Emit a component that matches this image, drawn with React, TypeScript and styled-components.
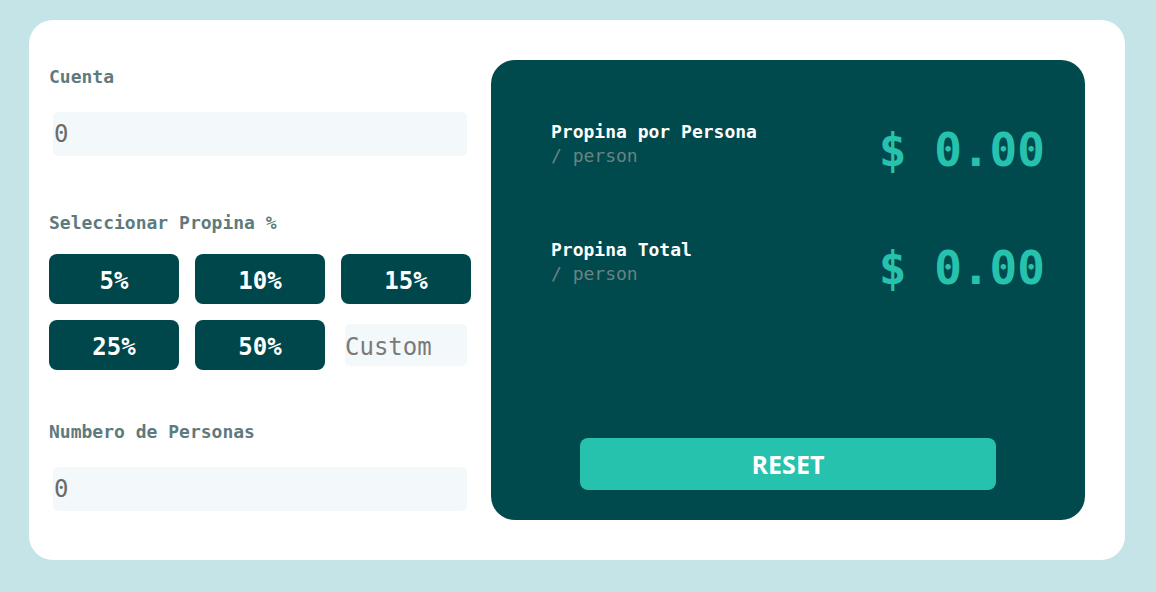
import React from "react";
import styled, { createGlobalStyle } from "styled-components";

const MONO = `"DejaVu Sans Mono", monospace`;

const GlobalStyle = createGlobalStyle`
  html, body { margin: 0; padding: 0; background: #c5e4e7; }
  body { font-family: ${MONO}; }
  * { box-sizing: border-box; }
`;

const Page = styled.div`
  padding: 20px 31px 32px 29px;
`;

const Card = styled.main`
  background: #ffffff;
  border-radius: 24px;
  height: 540px;
  padding: 40px 40px 40px 20px;
  display: grid;
  grid-template-columns: 422px 1fr;
  column-gap: 20px;
`;

const LeftColumn = styled.section`
  display: flex;
  flex-direction: column;
`;

const Field = styled.div<{ $gap?: number }>`
  display: flex;
  flex-direction: column;
  gap: 16px;
  margin-top: ${(p) => p.$gap ?? 0}px;
`;

const Label = styled.label`
  font-family: ${MONO};
  font-weight: bold;
  font-size: 18px;
  line-height: 32px;
  padding-top: 1px;
  margin-bottom: -1px;
  color: #5e7a7d;
`;

const TextInput = styled.input`
  margin: 4px;
  height: 44px;
  border: none;
  outline: none;
  border-radius: 5px;
  background: #f3f8fb;
  font-family: ${MONO};
  font-size: 24px;
  color: #6b6b6b;
  padding: 0 1px;
  &::placeholder { color: #7a7a7a; }
`;

const TipGrid = styled.div`
  display: grid;
  grid-template-columns: repeat(3, 130px);
  grid-auto-rows: 50px;
  gap: 16px;
`;

const TipButton = styled.button`
  border: none;
  border-radius: 8px;
  background: #00474b;
  color: #ffffff;
  font-family: ${MONO};
  font-weight: bold;
  font-size: 24px;
  padding: 3px 0 0;
  cursor: pointer;
`;

const CustomInput = styled(TextInput)`
  height: 42px;
  min-width: 0;
  font-size: 24px;
  padding: 3px 0 0;
`;

const ResultPanel = styled.section`
  background: #00494d;
  border-radius: 24px;
  padding: 60px 40px 30px 40px;
  display: flex;
  flex-direction: column;
`;

const ResultRow = styled.div<{ $gap?: number }>`
  display: flex;
  justify-content: space-between;
  align-items: flex-start;
  padding-left: 20px;
  margin-top: ${(p) => p.$gap ?? 0}px;
`;

const ResultText = styled.div`
  display: flex;
  flex-direction: column;
`;

const ResultTitle = styled.span`
  font-family: ${MONO};
  font-weight: bold;
  font-size: 18px;
  line-height: 24px;
  color: #ffffff;
`;

const ResultSub = styled.span`
  font-family: ${MONO};
  font-size: 18px;
  line-height: 24px;
  color: #6a8383;
`;

const Amount = styled.span`
  font-family: ${MONO};
  font-weight: bold;
  font-size: 46px;
  line-height: 56px;
  margin-top: 2px;
  color: #26c2ae;
  white-space: pre;
`;

const ResetButton = styled.button`
  margin-top: auto;
  align-self: center;
  width: 416px;
  height: 52px;
  border: none;
  border-radius: 8px;
  background: #26c2ae;
  color: #ffffff;
  font-family: "Open Sans", "Noto Sans", sans-serif;
  font-weight: bold;
  font-size: 25px;
  cursor: pointer;
`;

const tips = ["5%", "10%", "15%", "25%", "50%"];

export default function App() {
  return (
    <>
      <GlobalStyle />
      <Page>
        <Card>
          <LeftColumn>
            <Field>
              <Label>Cuenta</Label>
              <TextInput defaultValue="0" />
            </Field>
            <Field $gap={46}>
              <Label>Seleccionar Propina %</Label>
              <TipGrid>
                {tips.map((t) => (
                  <TipButton key={t}>{t}</TipButton>
                ))}
                <CustomInput placeholder="Custom" />
              </TipGrid>
            </Field>
            <Field $gap={45}>
              <Label>Numbero de Personas</Label>
              <TextInput defaultValue="0" />
            </Field>
          </LeftColumn>
          <ResultPanel>
            <ResultRow>
              <ResultText>
                <ResultTitle>Propina por Persona</ResultTitle>
                <ResultSub>/ person</ResultSub>
              </ResultText>
              <Amount>$ 0.00</Amount>
            </ResultRow>
            <ResultRow $gap={60}>
              <ResultText>
                <ResultTitle>Propina Total</ResultTitle>
                <ResultSub>/ person</ResultSub>
              </ResultText>
              <Amount>$ 0.00</Amount>
            </ResultRow>
            <ResetButton>RESET</ResetButton>
          </ResultPanel>
        </Card>
      </Page>
    </>
  );
}
